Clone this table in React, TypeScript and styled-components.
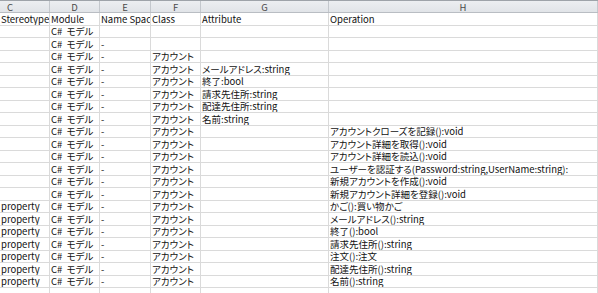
import React from 'react';
import styled, { createGlobalStyle } from 'styled-components';

const GlobalStyle = createGlobalStyle`
	html, body {
		margin: 0;
		padding: 0;
		background: #ffffff;
	}
	body {
		font-family: 'Noto Sans CJK JP', 'Noto Sans', sans-serif;
		font-feature-settings: 'palt';
	}
`;

const COLS = '50px 50px 51px 50px 128px 1fr';

const Sheet = styled.div`
	width: 598px;
	height: 293px;
	overflow: hidden;
	background: #fff;
`;

const HeaderRow = styled.div`
	display: grid;
	grid-template-columns: ${COLS};
	height: 13px;
	box-sizing: border-box;
	border-top: 1px solid #9ea3a9;
	border-bottom: 1px solid #b9bdc3;
	background: linear-gradient(#eceef1, #e1e4e8);
`;

const HeaderCell = styled.div<{ $offset?: number }>`
	display: flex;
	align-items: center;
	justify-content: ${p => (p.$offset !== undefined ? 'flex-start' : 'center')};
	padding-left: ${p => p.$offset ?? 0}px;
	border-right: 1px solid #c4c8cd;
	font-size: 9.5px;
	line-height: 10px;
	color: #4a4a4a;
`;

const Row = styled.div`
	display: grid;
	grid-template-columns: ${COLS};
	height: 12.5px;
`;

const Cell = styled.div`
	display: flex;
	align-items: flex-end;
	padding-left: 1px;
	box-sizing: border-box;
	border-right: 1px solid #dadada;
	border-bottom: 1px solid #dadada;
	font-size: 9.5px;
	line-height: 11px;
	color: #111;
	white-space: nowrap;
	overflow: hidden;
`;

type Line = [string, string, string, string, string, string];

const rows: Line[] = [
	['Stereotype', 'Module', 'Name Space', 'Class', 'Attribute', 'Operation'],
	['', 'C#\u00a0 モデル', '', '', '', ''],
	['', 'C#\u00a0 モデル', '-', '', '', ''],
	['', 'C#\u00a0 モデル', '-', 'アカウント', '', ''],
	['', 'C#\u00a0 モデル', '-', 'アカウント', 'メールアドレス:string', ''],
	['', 'C#\u00a0 モデル', '-', 'アカウント', '終了:bool', ''],
	['', 'C#\u00a0 モデル', '-', 'アカウント', '請求先住所:string', ''],
	['', 'C#\u00a0 モデル', '-', 'アカウント', '配達先住所:string', ''],
	['', 'C#\u00a0 モデル', '-', 'アカウント', '名前:string', ''],
	['', 'C#\u00a0 モデル', '-', 'アカウント', '', 'アカウントクローズを記録():void'],
	['', 'C#\u00a0 モデル', '-', 'アカウント', '', 'アカウント詳細を取得():void'],
	['', 'C#\u00a0 モデル', '-', 'アカウント', '', 'アカウント詳細を読込():void'],
	['', 'C#\u00a0 モデル', '-', 'アカウント', '', 'ユーザーを認証する(Password:string,UserName:string):'],
	['', 'C#\u00a0 モデル', '-', 'アカウント', '', '新規アカウントを作成():void'],
	['', 'C#\u00a0 モデル', '-', 'アカウント', '', '新規アカウント詳細を登録():void'],
	['property', 'C#\u00a0 モデル', '-', 'アカウント', '', 'かご():買い物かご'],
	['property', 'C#\u00a0 モデル', '-', 'アカウント', '', 'メールアドレス():string'],
	['property', 'C#\u00a0 モデル', '-', 'アカウント', '', '終了():bool'],
	['property', 'C#\u00a0 モデル', '-', 'アカウント', '', '請求先住所():string'],
	['property', 'C#\u00a0 モデル', '-', 'アカウント', '', '注文():注文'],
	['property', 'C#\u00a0 モデル', '-', 'アカウント', '', '配達先住所():string'],
	['property', 'C#\u00a0 モデル', '-', 'アカウント', '', '名前():string'],
	['', '', '', '', '', ''],
];

const App: React.FC = () => (
	<Sheet>
		<GlobalStyle />
		<HeaderRow>
			<HeaderCell $offset={7}>C</HeaderCell>
			<HeaderCell>D</HeaderCell>
			<HeaderCell>E</HeaderCell>
			<HeaderCell>F</HeaderCell>
			<HeaderCell>G</HeaderCell>
			<HeaderCell>H</HeaderCell>
		</HeaderRow>
		{rows.map((r, i) => (
			<Row key={i}>
				{r.map((text, j) => (
					<Cell key={j}>{text}</Cell>
				))}
			</Row>
		))}
	</Sheet>
);

export default App;
